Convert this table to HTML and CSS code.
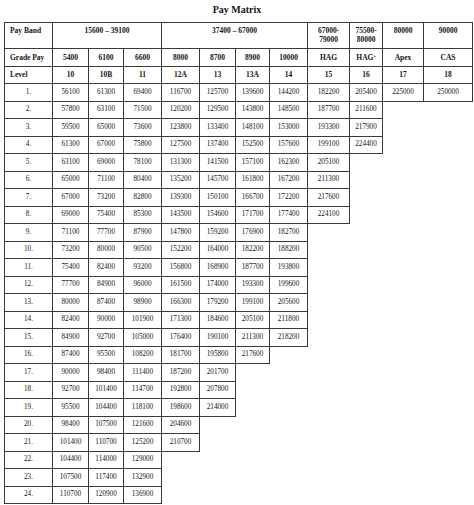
FILE: index.html
```html
<!DOCTYPE html>
<html>
<head>
<meta charset="utf-8">
<link rel="stylesheet" href="styles.css">
</head>
<body>
<div class="title">Pay Matrix</div>
<table class="matrix">
<colgroup>
<col class="c0"><col class="c1"><col class="c2"><col class="c3"><col class="c4"><col class="c5"><col class="c6"><col class="c7"><col class="c8"><col class="c9"><col class="c10"><col class="c11">
</colgroup>
<thead>
<tr class="band">
<th class="lbl">Pay Band</th>
<th colspan="3">15600 – 39100</th>
<th colspan="4">37400 – 67000</th>
<th>67000-<br>79000</th>
<th>75500-<br>80000</th>
<th>80000</th>
<th>90000</th>
</tr>
<tr>
<th class="lbl">Grade Pay</th>
<th>5400</th><th>6100</th><th>6600</th><th>8000</th><th>8700</th><th>8900</th><th>10000</th><th>HAG</th><th>HAG<sup>+</sup></th><th>Apex</th><th>CAS</th>
</tr>
<tr>
<th class="lbl">Level</th>
<th>10</th><th>10B</th><th>11</th><th>12A</th><th>13</th><th>13A</th><th>14</th><th>15</th><th>16</th><th>17</th><th>18</th>
</tr>
</thead>
<tbody>
<tr><td>1.</td><td>56100</td><td>61300</td><td>69400</td><td>116700</td><td>125700</td><td>139600</td><td>144200</td><td>182200</td><td>205400</td><td>225000</td><td>250000</td></tr>
<tr><td>2.</td><td>57800</td><td>63100</td><td>71500</td><td>120200</td><td>129500</td><td>143800</td><td>148500</td><td>187700</td><td>211600</td></tr>
<tr><td>3.</td><td>59500</td><td>65000</td><td>73600</td><td>123800</td><td>133400</td><td>148100</td><td>153000</td><td>193300</td><td>217900</td></tr>
<tr><td>4.</td><td>61300</td><td>67000</td><td>75800</td><td>127500</td><td>137400</td><td>152500</td><td>157600</td><td>199100</td><td>224400</td></tr>
<tr><td>5.</td><td>63100</td><td>69000</td><td>78100</td><td>131300</td><td>141500</td><td>157100</td><td>162300</td><td>205100</td></tr>
<tr><td>6.</td><td>65000</td><td>71100</td><td>80400</td><td>135200</td><td>145700</td><td>161800</td><td>167200</td><td>211300</td></tr>
<tr><td>7.</td><td>67000</td><td>73200</td><td>82800</td><td>139300</td><td>150100</td><td>166700</td><td>172200</td><td>217600</td></tr>
<tr><td>8.</td><td>69000</td><td>75400</td><td>85300</td><td>143500</td><td>154600</td><td>171700</td><td>177400</td><td>224100</td></tr>
<tr><td>9.</td><td>71100</td><td>77700</td><td>87900</td><td>147800</td><td>159200</td><td>176900</td><td>182700</td></tr>
<tr><td>10.</td><td>73200</td><td>80000</td><td>90500</td><td>152200</td><td>164000</td><td>182200</td><td>188200</td></tr>
<tr><td>11.</td><td>75400</td><td>82400</td><td>93200</td><td>156800</td><td>168900</td><td>187700</td><td>193800</td></tr>
<tr><td>12.</td><td>77700</td><td>84900</td><td>96000</td><td>161500</td><td>174000</td><td>193300</td><td>199600</td></tr>
<tr><td>13.</td><td>80000</td><td>87400</td><td>98900</td><td>166300</td><td>179200</td><td>199100</td><td>205600</td></tr>
<tr><td>14.</td><td>82400</td><td>90000</td><td>101900</td><td>171300</td><td>184600</td><td>205100</td><td>211800</td></tr>
<tr><td>15.</td><td>84900</td><td>92700</td><td>105000</td><td>176400</td><td>190100</td><td>211300</td><td>218200</td></tr>
<tr><td>16.</td><td>87400</td><td>95500</td><td>108200</td><td>181700</td><td>195800</td><td>217600</td></tr>
<tr><td>17.</td><td>90000</td><td>98400</td><td>111400</td><td>187200</td><td>201700</td></tr>
<tr><td>18.</td><td>92700</td><td>101400</td><td>114700</td><td>192800</td><td>207800</td></tr>
<tr><td>19.</td><td>95500</td><td>104400</td><td>118100</td><td>198600</td><td>214000</td></tr>
<tr><td>20.</td><td>98400</td><td>107500</td><td>121600</td><td>204600</td></tr>
<tr><td>21.</td><td>101400</td><td>110700</td><td>125200</td><td>210700</td></tr>
<tr><td>22.</td><td>104400</td><td>114000</td><td>129000</td></tr>
<tr><td>23.</td><td>107500</td><td>117400</td><td>132900</td></tr>
<tr><td>24.</td><td>110700</td><td>120900</td><td>136900</td></tr>
</tbody>
</table>
</body>
</html>
```
FILE: styles.css
```css
html, body {
  margin: 0;
  padding: 0;
  background: #ffffff;
}
body {
  font-family: "Liberation Serif", "Times New Roman", serif;
  color: #151515;
}
.title {
  font-weight: bold;
  font-size: 10px;
  line-height: 12px;
  text-align: center;
  padding-top: 4px;
  margin-bottom: 6px;
}
.matrix {
  margin-left: 4px;
  border-collapse: collapse;
  table-layout: fixed;
  width: 468px;
}
.c0 { width: 48px; }
.c1 { width: 36px; }
.c2 { width: 35px; }
.c3 { width: 38px; }
.c4 { width: 38px; }
.c5 { width: 36px; }
.c6 { width: 34px; }
.c7 { width: 38px; }
.c8 { width: 42px; }
.c9 { width: 33px; }
.c10 { width: 41px; }
.c11 { width: 49px; }
.matrix th,
.matrix td {
  border: 1px solid #3a3a3a;
  padding: 0;
  font-size: 7.2px;
  line-height: 9px;
  text-align: center;
  vertical-align: middle;
  white-space: nowrap;
}
.matrix th {
  font-weight: bold;
  font-size: 7.5px;
}
.matrix td {
  font-weight: normal;
}
.matrix tr {
  height: 17.5px;
}
.matrix tr.band {
  height: 26px;
}
.matrix tr.band th {
  vertical-align: top;
  padding-top: 3px;
}
.matrix th.lbl {
  text-align: left;
  padding-left: 5px;
}
.matrix sup {
  font-size: 4px;
  line-height: 0;
  vertical-align: 3px;
}
```
